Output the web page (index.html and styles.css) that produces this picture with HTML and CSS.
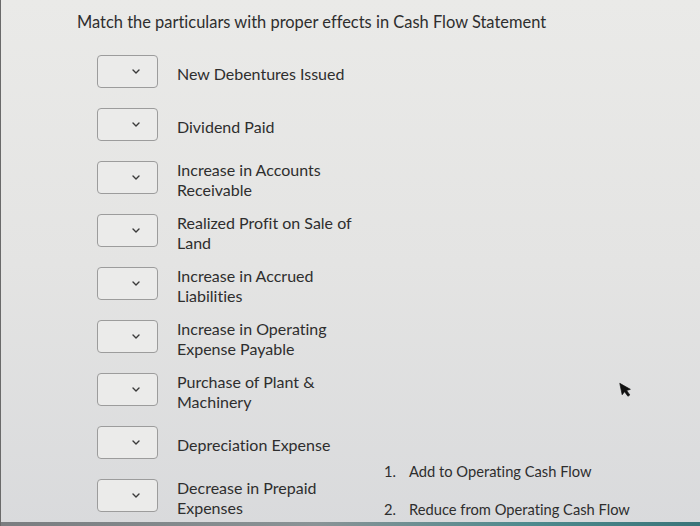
FILE: index.html
```html
<!DOCTYPE html>
<html lang="en">
<head>
<meta charset="utf-8">
<title>Match the particulars</title>
<link rel="stylesheet" href="styles.css">
</head>
<body>
<div class="screen">
  <main class="page">
    <h1 class="title">Match the particulars with proper effects in Cash Flow Statement</h1>
    <div class="content">
      <ul class="matches">
        <li class="row"><span class="select"><svg class="chev" viewBox="0 0 8 5" width="8" height="5"><path d="M1 1 L4 4 L7 1" fill="none" stroke="#3a3a3a" stroke-width="1.4" stroke-linecap="round" stroke-linejoin="round"/></svg></span><span class="label">New Debentures Issued</span></li>
        <li class="row"><span class="select"><svg class="chev" viewBox="0 0 8 5" width="8" height="5"><path d="M1 1 L4 4 L7 1" fill="none" stroke="#3a3a3a" stroke-width="1.4" stroke-linecap="round" stroke-linejoin="round"/></svg></span><span class="label">Dividend Paid</span></li>
        <li class="row"><span class="select"><svg class="chev" viewBox="0 0 8 5" width="8" height="5"><path d="M1 1 L4 4 L7 1" fill="none" stroke="#3a3a3a" stroke-width="1.4" stroke-linecap="round" stroke-linejoin="round"/></svg></span><span class="label">Increase in Accounts Receivable</span></li>
        <li class="row"><span class="select"><svg class="chev" viewBox="0 0 8 5" width="8" height="5"><path d="M1 1 L4 4 L7 1" fill="none" stroke="#3a3a3a" stroke-width="1.4" stroke-linecap="round" stroke-linejoin="round"/></svg></span><span class="label">Realized Profit on Sale of Land</span></li>
        <li class="row"><span class="select"><svg class="chev" viewBox="0 0 8 5" width="8" height="5"><path d="M1 1 L4 4 L7 1" fill="none" stroke="#3a3a3a" stroke-width="1.4" stroke-linecap="round" stroke-linejoin="round"/></svg></span><span class="label">Increase in Accrued Liabilities</span></li>
        <li class="row"><span class="select"><svg class="chev" viewBox="0 0 8 5" width="8" height="5"><path d="M1 1 L4 4 L7 1" fill="none" stroke="#3a3a3a" stroke-width="1.4" stroke-linecap="round" stroke-linejoin="round"/></svg></span><span class="label">Increase in Operating Expense Payable</span></li>
        <li class="row"><span class="select"><svg class="chev" viewBox="0 0 8 5" width="8" height="5"><path d="M1 1 L4 4 L7 1" fill="none" stroke="#3a3a3a" stroke-width="1.4" stroke-linecap="round" stroke-linejoin="round"/></svg></span><span class="label">Purchase of Plant &amp; Machinery</span></li>
        <li class="row"><span class="select"><svg class="chev" viewBox="0 0 8 5" width="8" height="5"><path d="M1 1 L4 4 L7 1" fill="none" stroke="#3a3a3a" stroke-width="1.4" stroke-linecap="round" stroke-linejoin="round"/></svg></span><span class="label">Depreciation Expense</span></li>
        <li class="row"><span class="select"><svg class="chev" viewBox="0 0 8 5" width="8" height="5"><path d="M1 1 L4 4 L7 1" fill="none" stroke="#3a3a3a" stroke-width="1.4" stroke-linecap="round" stroke-linejoin="round"/></svg></span><span class="label">Decrease in Prepaid Expenses</span></li>
      </ul>
      <ol class="options">
        <li class="option"><span class="num">1.</span><span>Add to Operating Cash Flow</span></li>
        <li class="option"><span class="num">2.</span><span>Reduce from Operating Cash Flow</span></li>
      </ol>
    </div>
  </main>
  <svg class="cursor" viewBox="0 0 12 16" width="13" height="17"><path d="M1 1 L1 12 L3.8 9.6 L6 14.5 L8 13.6 L5.9 8.9 L9.6 8.6 Z" fill="#111" stroke="#111" stroke-width="0.6" stroke-linejoin="round"/></svg>
  <div class="edge"></div>
</div>
</body>
</html>
```

FILE: styles.css
```css
html, body {
  margin: 0;
  padding: 0;
}
body {
  width: 700px;
  height: 526px;
  overflow: hidden;
  font-family: Lato, "Open Sans", sans-serif;
  font-variant-ligatures: none;
  color: #2e2e2e;
}
.screen {
  position: relative;
  width: 700px;
  height: 526px;
  background: linear-gradient(to bottom, #eaeae8 0%, #e4e4e3 50%, #d9dadc 100%);
  border-left: 1px solid #6a6a6a;
  box-sizing: border-box;
  display: flex;
  flex-direction: column;
}
.page {
  flex: 1;
  padding: 11px 0 0 76px;
}
.title {
  margin: 0;
  font-size: 16.45px;
  font-weight: 400;
  line-height: 22px;
}
.content {
  display: flex;
  align-items: flex-end;
  margin-top: 21px;
}
.matches {
  list-style: none;
  margin: 0;
  padding: 0 0 0 20px;
  display: flex;
  flex-direction: column;
  gap: 13px;
}
.row {
  display: flex;
  align-items: center;
  gap: 19px;
  height: 40px;
}
.select {
  flex: none;
  width: 61px;
  height: 33px;
  margin-bottom: 5px;
  border: 1px solid #9c9c9c;
  border-radius: 4px;
  background: #ebebea;
  display: flex;
  align-items: center;
  justify-content: flex-end;
  padding-right: 17px;
  box-sizing: border-box;
}
.chev {
  display: block;
}
.label {
  width: 178px;
  font-size: 16px;
  line-height: 20px;
}
.options {
  list-style: none;
  margin: 0 0 -1px 29px;
  padding: 0;
  display: flex;
  flex-direction: column;
  gap: 18px;
  font-size: 14.7px;
  line-height: 20px;
}
.option {
  display: flex;
}
.num {
  width: 25px;
}
.cursor {
  position: absolute;
  left: 619px;
  top: 381px;
  transform: rotate(-12deg);
}
.edge {
  height: 4px;
  flex: none;
  background: linear-gradient(to right, #7a7d80 0%, #8a9396 45%, #4f8a8e 75%, #3a7479 100%);
}
```
